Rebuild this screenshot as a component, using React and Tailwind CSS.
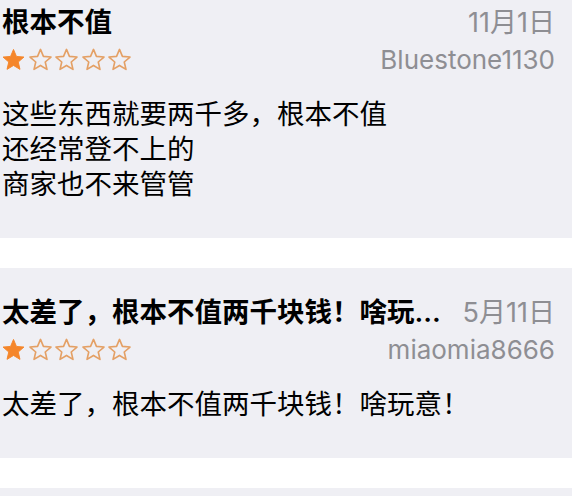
import React from 'react';

const reviews = [
    {
        title: '根本不值',
        date: '11月1日',
        user: 'Bluestone1130',
        rating: 1,
        body: ['这些东西就要两千多，根本不值', '还经常登不上的', '商家也不来管管'],
    },
    {
        title: '太差了，根本不值两千块钱！啥玩意！',
        date: '5月11日',
        user: 'miaomia8666',
        rating: 1,
        body: ['太差了，根本不值两千块钱！啥玩意！'],
    },
];

const Star = ({ filled }) => (
    <svg width="23" height="23" viewBox="0 0 24 24">
        <path
            d="M12 1.5L15.06 8.79L22.94 9.45L16.95 14.61L18.76 22.3L12 18.2L5.24 22.3L7.05 14.61L1.06 9.45L8.94 8.79Z"
            fill={filled ? '#f5862b' : 'none'}
            stroke={filled ? '#f5862b' : '#e4a065'}
            strokeWidth={filled ? 1 : 1.7}
            strokeLinejoin="round"
        />
    </svg>
);

const ReviewCard = ({ review, className = '' }) => (
    <div className={`bg-[#efeff4] pt-[27px] pb-[36px] pl-[2px] pr-[17px] ${className}`}>
        {/* Title + date */}
        <div className="flex items-baseline h-[34px] leading-[34px]">
            <div className="flex-1 min-w-0 truncate text-[27.5px] font-semibold text-black">{review.title}</div>
            <div className="shrink-0 ml-3 text-[27px] text-[#8e8e93]">{review.date}</div>
        </div>

        {/* Stars + user */}
        <div className="flex items-start justify-between h-[32px]">
            <div className="flex gap-[3.5px] mt-[9px]">
                {[1, 2, 3, 4, 5].map((i) => (
                    <Star key={i} filled={i <= review.rating} />
                ))}
            </div>
            <div className="mt-[6px] text-[26px] leading-[30px] text-[#8e8e93]">{review.user}</div>
        </div>

        {/* Body */}
        <div className="mt-[26px] text-[27.5px] leading-[35px] text-black">
            {review.body.map((line, i) => (
                <div key={i}>{line}</div>
            ))}
        </div>
    </div>
);

export default function App() {
    return (
        <div
            className="w-[572px] h-[496px] overflow-hidden bg-white"
            style={{ fontFamily: 'Inter, "Noto Sans CJK SC", sans-serif' }}
        >
            <ReviewCard review={reviews[0]} className="-mt-[22px]" />
            <div className="h-[30px]" />
            <ReviewCard review={reviews[1]} />
            <div className="h-[30px]" />
            <div className="bg-[#efeff4] h-[40px]" />
        </div>
    );
}
